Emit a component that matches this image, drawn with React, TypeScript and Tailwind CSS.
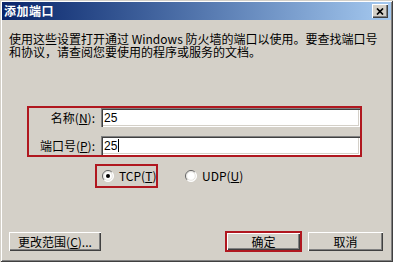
const raised =
  "bg-[#D4D0C8] shadow-[inset_1px_1px_0_#fff,inset_-1px_-1px_0_#404040,inset_-2px_-2px_0_#808080]";
const sunken =
  "bg-white shadow-[inset_1px_1px_0_#808080,inset_2px_2px_0_#404040,inset_-1px_-1px_0_#fff,inset_-2px_-2px_0_#D4D0C8]";

function Radio({ id, checked }: { id: string; checked?: boolean }) {
  return (
    <svg width="12" height="12" viewBox="0 0 12 12" className="shrink-0">
      <defs>
        <linearGradient id={id} x1="0" y1="0" x2="1" y2="1">
          <stop offset="0.45" stopColor="#606060" />
          <stop offset="0.55" stopColor="#ffffff" />
        </linearGradient>
      </defs>
      <circle cx="6" cy="6" r="5.5" fill="#fff" stroke={`url(#${id})`} />
      <circle cx="6" cy="6" r="4.3" fill="none" stroke="#D4D0C8" strokeWidth="0.6" />
      {checked && <circle cx="6" cy="6" r="2" fill="#000" />}
    </svg>
  );
}

function FieldRow({
  label,
  hotkey,
  value,
  caret,
  className,
}: {
  label: string;
  hotkey: string;
  value: string;
  caret?: boolean;
  className?: string;
}) {
  return (
    <div className={`flex h-[19px] items-center ${className ?? ""}`}>
      <div className="w-[72px] pr-[6px] text-right text-[12px] leading-[12px] whitespace-nowrap">
        {label}(<span className="underline">{hotkey}</span>):
      </div>
      <div className={`flex-1 h-full flex items-center pl-[3px] ${sunken}`}>
        <span className="font-['Liberation_Sans',sans-serif] text-[12px] leading-[12px]">
          {value}
        </span>
        {caret && <span className="ml-px w-px h-[13px] bg-black" />}
      </div>
    </div>
  );
}

export default function App() {
  return (
    <div className="w-[393px] h-[262px] bg-[#D4D0C8] p-[2px] flex flex-col font-['Noto_Sans_CJK_SC',sans-serif] text-black shadow-[inset_1px_1px_0_#D4D0C8,inset_-1px_-1px_0_#404040,inset_2px_2px_0_#fff,inset_-2px_-2px_0_#808080]">
      {/* title bar */}
      <div className="h-[18px] flex items-center justify-between bg-gradient-to-r from-[#0A246A] to-[#A6CAF0] pl-[2px] pr-[3px]">
        <span className="text-white font-bold text-[12px] leading-[12px] tracking-[0.5px]">
          添加端口
        </span>
        <div className={`w-[16px] h-[14px] flex items-center justify-center ${raised}`}>
          <svg width="8" height="7" viewBox="0 0 8 7">
            <path d="M1 0.5 L7 6.5 M7 0.5 L1 6.5" stroke="#000" strokeWidth="1.7" />
          </svg>
        </div>
      </div>

      {/* body */}
      <div className="flex-1 flex flex-col">
        <div className="mt-[12px] ml-[7px] text-[12px] leading-[13px] whitespace-nowrap">
          <p>使用这些设置打开通过 Windows 防火墙的端口以使用。要查找端口号</p>
          <p>和协议，请查阅您要使用的程序或服务的文档。</p>
        </div>

        <div className="mt-[48px] ml-[25px] w-[335px] h-[51px] border-2 border-[#B0171F] flex flex-col">
          <FieldRow label="名称" hotkey="N" value="25" />
          <FieldRow label="端口号" hotkey="P" value="25" caret className="mt-[9px]" />
        </div>

        <div className="mt-[7px] ml-[93px] flex items-center">
          <div className="w-[63px] h-[24px] border-2 border-[#B0171F] flex items-center pl-[5px] gap-[5px]">
            <Radio id="rg-tcp" checked />
            <span className="text-[12px] leading-[12px] whitespace-nowrap">
              TCP(<span className="underline">T</span>)
            </span>
          </div>
          <div className="ml-[27px] flex items-center gap-[5px]">
            <Radio id="rg-udp" />
            <span className="text-[12px] leading-[12px] whitespace-nowrap">
              UDP(<span className="underline">U</span>)
            </span>
          </div>
        </div>

        <div className="mt-[43px] ml-[7px] mr-[8px] flex items-center">
          <button className={`w-[92px] h-[19px] text-[12px] leading-[12px] whitespace-nowrap ${raised}`}>
            更改范围(<span className="underline">C</span>)...
          </button>
          <div className="flex-1" />
          <div className="w-[77px] h-[21px] border-2 border-[#B0171F] flex">
            <button className={`flex-1 text-[12px] leading-[12px] ${raised}`}>确定</button>
          </div>
          <button className={`ml-[6px] w-[75px] h-[19px] text-[12px] leading-[12px] ${raised}`}>
            取消
          </button>
        </div>
      </div>
    </div>
  );
}
